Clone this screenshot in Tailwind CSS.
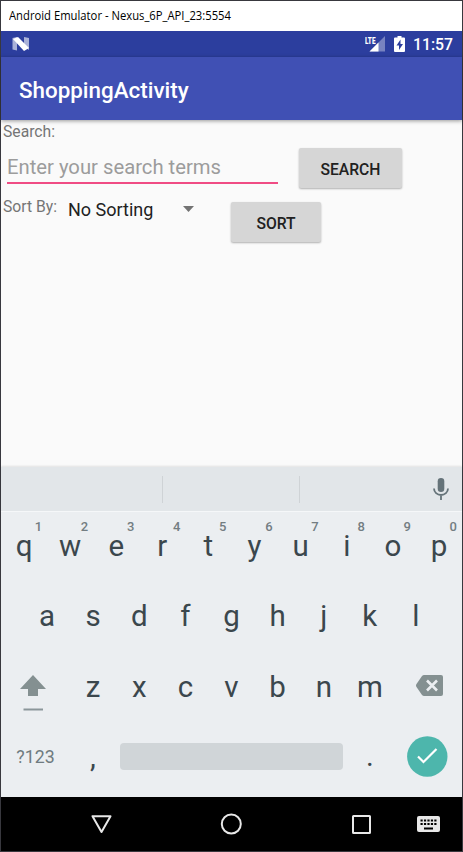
<!DOCTYPE html>
<html lang="en">
<head>
<meta charset="utf-8">
<title>Android Emulator</title>
<script src="https://cdn.jsdelivr.net/npm/@tailwindcss/browser@4"></script>
</head>
<body class="w-[463px] h-[852px] overflow-hidden font-[Roboto,sans-serif]">
<div class="w-[463px] h-[852px] border border-[#38383e] bg-[#fafafa] flex flex-col">
  <!-- Window title -->
  <div class="h-[30px] shrink-0 bg-white flex items-center pl-[8px] text-black font-['Open_Sans',sans-serif] text-[12px] whitespace-nowrap"><svg class="w-[240px] h-[24px]" viewBox="0 0 240 24"><text x="0" y="16" font-size="12" textLength="222" lengthAdjust="spacingAndGlyphs">Android Emulator - Nexus_6P_API_23:5554</text></svg></div>

  <!-- Status bar -->
  <div class="h-[26px] shrink-0 bg-[#2c3e9e] flex items-center justify-between pl-[11px] pr-[9px]">
    <svg class="w-[17px] h-[14px]" viewBox="0 0 17 14"><path d="M.5 1 5 0v13.500L.5 12.500zM12 0l5 1v12l-5-3z" fill="#aab2d8"/><path d="M1 2 6 0 17 11 12 14z" fill="#fff"/></svg>
    <div class="flex items-center text-white">
      <svg class="w-[20px] h-[16px]" viewBox="0 0 20 16"><path d="M20 0v15.500H4.500z" fill="#7782c0"/><path d="M13.500 6.500v9h-9z" fill="#fff"/><path d="M0 0h11v8H0z" fill="#2c3e9e"/><text x="0" y="7.500" font-size="9" font-weight="900" fill="#fff" textLength="10.500" lengthAdjust="spacingAndGlyphs">LTE</text></svg>
      <svg class="w-[11px] h-[16px] ml-[9px]" viewBox="0 0 11 16"><path d="M3.500 0h4v1.500H10q1 0 1 1V15q0 1-1 1H1q-1 0-1-1V2.500q0-1 1-1h2.500z" fill="#fff"/><path d="M6.500 3.500 2.500 9.500H5V14l4-6H6.500z" fill="#2c3e9e"/></svg>
      <span class="ml-[8px] w-[40px] pt-[2px] text-[15.800px] leading-[24px] font-medium whitespace-nowrap">11:57</span>
    </div>
  </div>

  <!-- App bar -->
  <div class="h-[63px] shrink-0 bg-[#4050b4] shadow-[0_1px_4px_rgba(0,0,0,0.4)] flex items-center pl-[18px] pt-[4px] text-white text-[22.4px] font-medium">ShoppingActivity</div>

  <!-- Form -->
  <div class="h-[347px] shrink-0 pl-[2px]">
    <div class="h-[22px] text-[15.7px] leading-[24px] text-[#757575]">Search:</div>
    <div class="flex h-[48px] items-start">
      <div class="ml-[4px] mt-[5px] w-[271px] h-[37px] border-b-2 border-[#f04c84] text-[20.250px] leading-[40px] text-[#9c9c9c] whitespace-nowrap">Enter your search terms</div>
      <div class="ml-[21px] mt-[6px] w-[103px] h-[40px] rounded-[2px] bg-[#d6d6d6] shadow-[0_1px_2px_rgba(0,0,0,0.3)] text-[15.7px] leading-[43px] font-medium text-center text-[#212121]">SEARCH</div>
    </div>
    <div class="flex h-[56px] items-start">
      <div class="mt-[5px] w-[65px] text-[15.7px] leading-[24px] text-[#757575] whitespace-nowrap">Sort By:</div>
      <div class="w-[115px] h-[39px] flex items-center text-[18px] text-[#212121] whitespace-nowrap">No Sorting</div>
      <svg class="w-[11px] h-[6px] mt-[16px]" viewBox="0 0 11 6"><path d="M0 0h11L5.500 6z" fill="#737373"/></svg>
      <div class="ml-[37px] mt-[12px] w-[90px] h-[40px] rounded-[2px] bg-[#d6d6d6] shadow-[0_1px_2px_rgba(0,0,0,0.3)] text-[15.7px] leading-[43px] font-medium text-center text-[#212121]">SORT</div>
    </div>
  </div>

  <!-- Suggestion strip -->
  <div class="h-[44px] shrink-0 bg-[#e2e6e9] shadow-[0_-1px_2px_rgba(0,0,0,0.1)] flex items-center">
    <div class="w-[162px] h-[27px] border-r border-[#cfd3d6]"></div>
    <div class="w-[137px] h-[27px] border-r border-[#cfd3d6]"></div>
    <svg class="ml-[133px] w-[16px] h-[22px]" viewBox="0 0 16 22"><rect x="4.700" y="0" width="6.600" height="14" rx="3.300" fill="#657379"/><path d="M1 10.500a7 6.500 0 0 0 14 0M8 17v5" fill="none" stroke="#657379" stroke-width="1.800"/></svg>
  </div>

  <!-- Keyboard -->
  <div class="h-[286px] shrink-0 bg-[#ebeef1] shadow-[inset_0_1px_0_#f5f7f9] text-[29.500px] leading-[70px] text-[#3b474d] text-center">
    <div class="grid grid-cols-10 h-[70px]">
      <div class="relative">q<span class="absolute right-[5px] top-[8px] text-[13px] leading-[16px] font-medium text-[#737d82]">1</span></div>
      <div class="relative">w<span class="absolute right-[5px] top-[8px] text-[13px] leading-[16px] font-medium text-[#737d82]">2</span></div>
      <div class="relative">e<span class="absolute right-[5px] top-[8px] text-[13px] leading-[16px] font-medium text-[#737d82]">3</span></div>
      <div class="relative">r<span class="absolute right-[5px] top-[8px] text-[13px] leading-[16px] font-medium text-[#737d82]">4</span></div>
      <div class="relative">t<span class="absolute right-[5px] top-[8px] text-[13px] leading-[16px] font-medium text-[#737d82]">5</span></div>
      <div class="relative">y<span class="absolute right-[5px] top-[8px] text-[13px] leading-[16px] font-medium text-[#737d82]">6</span></div>
      <div class="relative">u<span class="absolute right-[5px] top-[8px] text-[13px] leading-[16px] font-medium text-[#737d82]">7</span></div>
      <div class="relative">i<span class="absolute right-[5px] top-[8px] text-[13px] leading-[16px] font-medium text-[#737d82]">8</span></div>
      <div class="relative">o<span class="absolute right-[5px] top-[8px] text-[13px] leading-[16px] font-medium text-[#737d82]">9</span></div>
      <div class="relative">p<span class="absolute right-[5px] top-[8px] text-[13px] leading-[16px] font-medium text-[#737d82]">0</span></div>
    </div>
    <div class="grid grid-cols-9 h-[70px] mx-[23px]">
      <div>a</div><div>s</div><div>d</div><div>f</div><div>g</div><div>h</div><div>j</div><div>k</div><div>l</div>
    </div>
    <div class="flex h-[69px] mt-[1px]">
      <div class="w-[69px] pl-[19px] pt-[23px]"><svg class="w-[26px] h-[37px]" viewBox="0 0 26 37"><path d="M13 0 26 14H18v7H8v-7H0z" fill="#849091"/><path d="M3.500 34.500h19.500" stroke="#8b969a" stroke-width="2"/></svg></div>
      <div class="w-[323px] grid grid-cols-7"><div>z</div><div>x</div><div>c</div><div>v</div><div>b</div><div>n</div><div>m</div></div>
      <div class="pl-[23px] pt-[23px]"><svg class="w-[28px] h-[21px]" viewBox="0 0 28 21"><path d="M8 0h17q2 0 2 2v17q0 2-2 2H8q-1 0-2-1L.5 12q-1-1.500 0-3L6 1q1-1 2-1z" fill="#849091"/><path d="m11 5.500 10 10m0-10-10 10" stroke="#ebeef1" stroke-width="2.600"/></svg></div>
    </div>
    <div class="flex h-[70px] items-center">
      <div class="w-[69px] text-[17.800px] text-[#6f7b80] pt-[2px]">?123</div>
      <div class="w-[46px] pt-px">,</div>
      <div class="ml-[4px] w-[223px] h-[27px] rounded-[4px] bg-[#d0d5d8]"></div>
      <div class="ml-[4px] w-[46px]">.</div>
      <svg class="ml-[14px] w-[41px] h-[41px]" viewBox="0 0 41 41"><circle cx="20.300" cy="20.500" r="20.200" fill="#4db6ac"/><path d="m11 20.500 5.500 5.500 13-13" fill="none" stroke="#fff" stroke-width="2.200"/></svg>
    </div>
  </div>

  <!-- Navigation bar -->
  <div class="h-[54px] shrink-0 bg-black flex items-center">
    <svg class="ml-[90px] w-[21px] h-[19px]" viewBox="0 0 21 19"><path d="M1.500 1.200h18L10.500 17z" fill="none" stroke="#e8e8e8" stroke-width="2" stroke-linejoin="round"/></svg>
    <svg class="ml-[108px] w-[22px] h-[22px]" viewBox="0 0 22 22"><circle cx="11.300" cy="11" r="9.500" fill="none" stroke="#e8e8e8" stroke-width="2"/></svg>
    <svg class="ml-[110px] w-[19px] h-[19px]" viewBox="0 0 19 19"><rect x="1" y="1" width="17" height="17" rx="0.500" fill="none" stroke="#e8e8e8" stroke-width="2"/></svg>
    <svg class="ml-[46px] w-[23px] h-[16px]" viewBox="0 0 23 16"><rect width="23" height="16" rx="2" fill="#e8e8e8"/><path d="M3.500 4.500h16M3.500 8h16" stroke="#000" stroke-width="2" stroke-dasharray="2.200 1.250"/><path d="M7 12.500h9" stroke="#000" stroke-width="2"/></svg>
  </div>
</div>
</body>
</html>
